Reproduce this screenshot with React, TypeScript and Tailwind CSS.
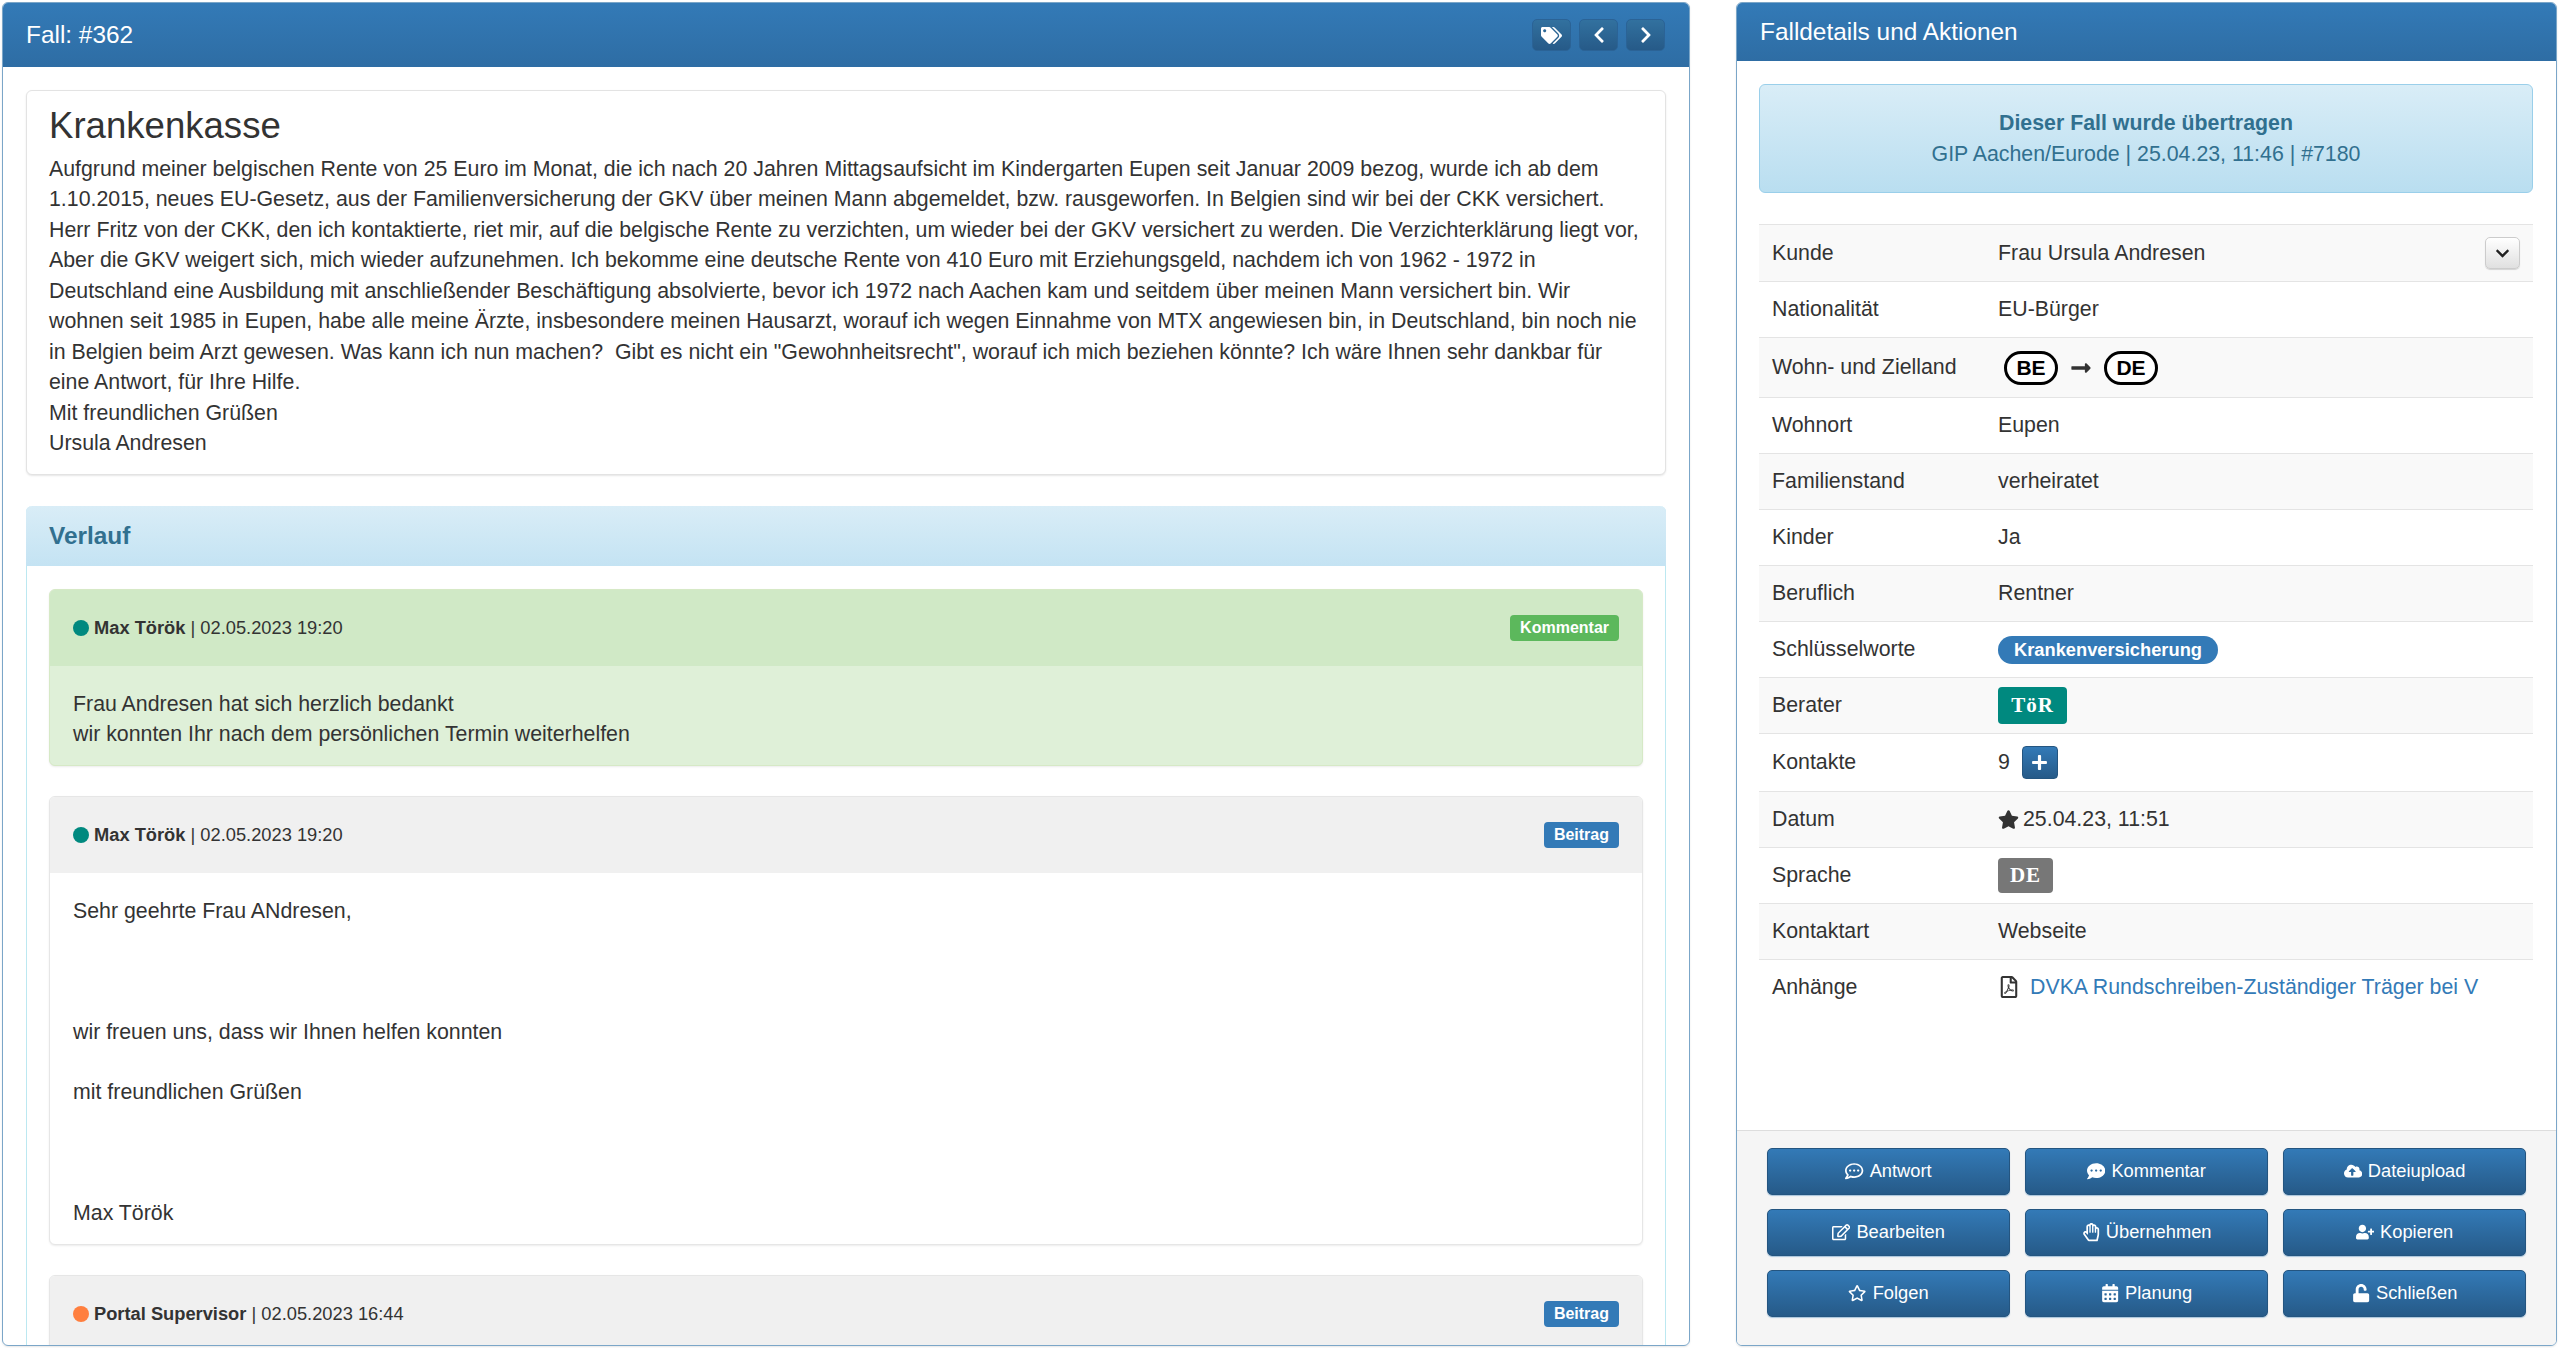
import type { ReactNode } from 'react';
import {
  FaTags,
  FaChevronLeft,
  FaChevronRight,
  FaChevronDown,
  FaPlus,
  FaStar,
  FaRegStar,
  FaRegFilePdf,
  FaRegCommentDots,
  FaCommentDots,
  FaCloudUploadAlt,
  FaRegEdit,
  FaRegHandPaper,
  FaUserPlus,
  FaCalendarAlt,
  FaUnlock,
  FaLongArrowAltRight,
} from 'react-icons/fa';

const HeadButton = ({ children }: { children: ReactNode }) => (
  <button className="flex h-[32px] w-[39px] items-center justify-center rounded-[5px] border border-[#2b6396] bg-gradient-to-b from-[#32719f] to-[#265a88] text-[18px] text-white">
    {children}
  </button>
);

const Message = ({
  dot,
  name,
  date,
  tag,
  tagColor,
  green,
  tight,
  children,
}: {
  dot: string;
  name: string;
  date: string;
  tag: string;
  tagColor: string;
  green?: boolean;
  tight?: boolean;
  children?: ReactNode;
}) => (
  <div
    className={`mb-[30px] shrink-0 overflow-hidden rounded-[6px] border shadow-[0_1px_2px_rgba(0,0,0,0.08)] ${
      green ? 'border-[#d6e9c6] bg-[#dff0d8]' : 'border-[#e6e6e6] bg-white'
    }`}
  >
    <div
      className={`flex h-[76px] items-center justify-between pl-[23px] pr-[23px] text-[18.3px] ${
        green ? 'bg-[#d0e9c6]' : 'bg-[#f0f0f0]'
      }`}
    >
      <div className="flex items-center">
        <span className="mr-[5px] h-[16px] w-[16px] rounded-full" style={{ backgroundColor: dot }} />
        <span>
          <b>{name}</b> | {date}
        </span>
      </div>
      <span
        className="rounded-[4px] px-[10px] py-[3px] text-[16px] font-bold leading-[20px] text-white"
        style={{ backgroundColor: tagColor }}
      >
        {tag}
      </span>
    </div>
    <div className={`pl-[23px] pr-[22px] pt-[23px] ${tight ? 'pb-[16px] leading-[30.2px]' : 'pb-[15px]'}`}>
      {children}
    </div>
  </div>
);

const Row = ({ label, odd, h, children }: { label: string; odd?: boolean; h: number; children: ReactNode }) => (
  <div
    className={`flex items-center border-t border-[#e4e4e4] px-[13px] ${odd ? 'bg-[#f9f9f9]' : 'bg-white'}`}
    style={{ height: h }}
  >
    <div className="w-[226px] shrink-0">{label}</div>
    <div className="flex flex-1 items-center">{children}</div>
  </div>
);

const CountryPill = ({ children }: { children: ReactNode }) => (
  <span className="flex h-[34px] w-[54px] items-center justify-center rounded-full border-[3px] border-black bg-white text-[21px] font-bold leading-none text-black">
    {children}
  </span>
);

const ActionButton = ({ icon, children }: { icon: ReactNode; children: ReactNode }) => (
  <button className="flex h-[47px] items-center justify-center gap-[6px] rounded-[5px] border border-[#245580] bg-gradient-to-b from-[#337ab7] to-[#265a88] text-[18.3px] text-white shadow-[0_1px_1px_rgba(51,122,183,0.4)]">
    {icon}
    {children}
  </button>
);

export default function App() {
  return (
    <div className="flex h-[1348px] w-[2560px] gap-[46px] overflow-hidden bg-white pb-[2px] pl-[2px] pr-[3px] pt-[2px] font-['Liberation_Sans',Arial,sans-serif] text-[21.33px] leading-[30.48px] text-[#333]">
      {/* Left: Fall */}
      <div className="flex w-[1688px] shrink-0 flex-col overflow-hidden rounded-[6px] border border-[#7ba6c8] shadow-[0_1px_2px_rgba(0,0,0,0.1)]">
        <div className="flex h-[64px] shrink-0 items-center justify-between bg-gradient-to-b from-[#337ab7] to-[#2e6da4] pl-[23px] pr-[24px] text-[24.4px] text-white">
          <span>Fall: #362</span>
          <div className="flex gap-[8px]">
            <HeadButton>
              <FaTags className="text-[21px]" />
            </HeadButton>
            <HeadButton>
              <FaChevronLeft />
            </HeadButton>
            <HeadButton>
              <FaChevronRight />
            </HeadButton>
          </div>
        </div>

        <div className="flex min-h-0 flex-1 flex-col px-[23px] pt-[23px]">
          <div className="mb-[31px] shrink-0 rounded-[6px] border border-[#e3e3e3] bg-white px-[22px] pb-[15px] pt-[15px] shadow-[0_1px_2px_rgba(0,0,0,0.1)]">
            <h3 className="mb-[8px] text-[36.6px] font-normal leading-[40px]">Krankenkasse</h3>
            <p>
              Aufgrund meiner belgischen Rente von 25 Euro im Monat, die ich nach 20 Jahren Mittagsaufsicht im
              Kindergarten Eupen seit Januar 2009 bezog, wurde ich ab dem 1.10.2015, neues EU-Gesetz, aus der
              Familienversicherung der GKV über meinen Mann abgemeldet, bzw. rausgeworfen. In Belgien sind wir bei der
              CKK versichert. Herr Fritz von der CKK, den ich kontaktierte, riet mir, auf die belgische Rente zu
              verzichten, um wieder bei der GKV versichert zu werden. Die Verzichterklärung liegt vor, Aber die GKV
              weigert sich, mich wieder aufzunehmen. Ich bekomme eine deutsche Rente von 410 Euro mit Erziehungsgeld,
              nachdem ich von 1962 - 1972 in Deutschland eine Ausbildung mit anschließender Beschäftigung absolvierte,
              bevor ich 1972 nach Aachen kam und seitdem über meinen Mann versichert bin. Wir wohnen seit 1985 in Eupen,
              habe alle meine Ärzte, insbesondere meinen Hausarzt, worauf ich wegen Einnahme von MTX angewiesen bin, in
              Deutschland, bin noch nie in Belgien beim Arzt gewesen. Was kann ich nun machen?&nbsp; Gibt es nicht ein
              "Gewohnheitsrecht", worauf ich mich beziehen könnte? Ich wäre Ihnen sehr dankbar für eine Antwort, für
              Ihre Hilfe.
              <br />
              Mit freundlichen Grüßen
              <br />
              Ursula Andresen
            </p>
          </div>

          <div className="flex min-h-0 flex-1 flex-col rounded-t-[6px] border-x border-[#bce8f1]">
            <div className="-mx-px flex h-[60px] shrink-0 items-center rounded-t-[6px] bg-gradient-to-b from-[#d9edf7] to-[#c4e3f3] px-[23px] text-[24.4px] font-bold text-[#31708f]">
              Verlauf
            </div>
            <div className="flex min-h-0 flex-1 flex-col overflow-hidden px-[22px] pt-[23px]">
              <Message dot="#00897f" name="Max Török" date="02.05.2023 19:20" tag="Kommentar" tagColor="#5cb85c" green>
                Frau Andresen hat sich herzlich bedankt
                <br />
                wir konnten Ihr nach dem persönlichen Termin weiterhelfen
              </Message>
              <Message dot="#00897f" name="Max Török" date="02.05.2023 19:20" tag="Beitrag" tagColor="#337ab7" tight>
                Sehr geehrte Frau ANdresen,
                <br />
                <br />
                <br />
                <br />
                wir freuen uns, dass wir Ihnen helfen konnten
                <br />
                <br />
                mit freundlichen Grüßen
                <br />
                <br />
                <br />
                <br />
                Max Török
              </Message>
              <Message dot="#ff7f3f" name="Portal Supervisor" date="02.05.2023 16:44" tag="Beitrag" tagColor="#337ab7" />
            </div>
          </div>
        </div>
      </div>

      {/* Right: Falldetails */}
      <div className="flex min-w-0 flex-1 flex-col overflow-hidden rounded-[6px] border border-[#7ba6c8] shadow-[0_1px_2px_rgba(0,0,0,0.1)]">
        <div className="flex h-[58px] shrink-0 items-center bg-gradient-to-b from-[#337ab7] to-[#2e6da4] px-[23px] text-[24.4px] text-white">
          Falldetails und Aktionen
        </div>

        <div className="min-h-0 flex-1 pl-[22px] pr-[23px] pt-[23px]">
          <div className="mb-[31px] flex h-[109px] flex-col items-center justify-center rounded-[6px] border border-[#9acfea] bg-gradient-to-b from-[#d9edf7] to-[#b9def0] text-[#31708f]">
            <b>Dieser Fall wurde übertragen</b>
            <span>GIP Aachen/Eurode | 25.04.23, 11:46 | #7180</span>
          </div>

          <Row label="Kunde" odd h={57}>
            <span className="flex-1">Frau Ursula Andresen</span>
            <button className="flex h-[32px] w-[35px] items-center justify-center rounded-[5px] border border-[#ccc] bg-gradient-to-b from-white to-[#e0e0e0] text-[15px] text-[#222] shadow-[0_1px_1px_rgba(0,0,0,0.15)]">
              <FaChevronDown />
            </button>
          </Row>
          <Row label="Nationalität" h={56}>
            EU-Bürger
          </Row>
          <Row label="Wohn- und Zielland" odd h={60}>
            <div className="flex items-center pl-[6px]">
              <CountryPill>BE</CountryPill>
              <FaLongArrowAltRight className="mx-[12px] text-[22px] text-[#333]" />
              <CountryPill>DE</CountryPill>
            </div>
          </Row>
          <Row label="Wohnort" h={56}>
            Eupen
          </Row>
          <Row label="Familienstand" odd h={56}>
            verheiratet
          </Row>
          <Row label="Kinder" h={56}>
            Ja
          </Row>
          <Row label="Beruflich" odd h={56}>
            Rentner
          </Row>
          <Row label="Schlüsselworte" h={56}>
            <span className="rounded-full bg-[#337ab7] px-[16px] text-[18.3px] font-bold leading-[28px] text-white">
              Krankenversicherung
            </span>
          </Row>
          <Row label="Berater" odd h={56}>
            <span className="flex h-[37px] w-[69px] items-center justify-center rounded-[4px] bg-[#00897f] font-['Liberation_Serif',serif] text-[21px] font-bold tracking-[1px] text-white">
              TöR
            </span>
          </Row>
          <Row label="Kontakte" h={58}>
            9
            <button className="ml-[12px] flex h-[33px] w-[36px] items-center justify-center rounded-[4px] border border-[#245580] bg-gradient-to-b from-[#337ab7] to-[#265a88] text-[17px] text-white">
              <FaPlus />
            </button>
          </Row>
          <Row label="Datum" odd h={56}>
            <FaStar className="mr-[4px] text-[21px] text-[#333]" />
            25.04.23, 11:51
          </Row>
          <Row label="Sprache" h={56}>
            <span className="flex h-[35px] w-[55px] items-center justify-center rounded-[4px] bg-[#777] font-['Liberation_Serif',serif] text-[21px] font-bold tracking-[1px] text-white">
              DE
            </span>
          </Row>
          <Row label="Kontaktart" odd h={56}>
            Webseite
          </Row>
          <Row label="Anhänge" h={56}>
            <FaRegFilePdf className="mr-[10px] text-[22px] text-[#333]" />
            <span className="text-[#337ab7]">DVKA Rundschreiben-Zuständiger Träger bei V</span>
          </Row>
        </div>

        <div className="grid shrink-0 grid-cols-3 gap-x-[15px] gap-y-[14px] border-t border-[#ddd] bg-[#f5f5f5] px-[30px] pb-[28px] pt-[17px]">
          <ActionButton icon={<FaRegCommentDots />}>Antwort</ActionButton>
          <ActionButton icon={<FaCommentDots />}>Kommentar</ActionButton>
          <ActionButton icon={<FaCloudUploadAlt />}>Dateiupload</ActionButton>
          <ActionButton icon={<FaRegEdit />}>Bearbeiten</ActionButton>
          <ActionButton icon={<FaRegHandPaper />}>Übernehmen</ActionButton>
          <ActionButton icon={<FaUserPlus />}>Kopieren</ActionButton>
          <ActionButton icon={<FaRegStar />}>Folgen</ActionButton>
          <ActionButton icon={<FaCalendarAlt />}>Planung</ActionButton>
          <ActionButton icon={<FaUnlock />}>Schließen</ActionButton>
        </div>
      </div>
    </div>
  );
}
